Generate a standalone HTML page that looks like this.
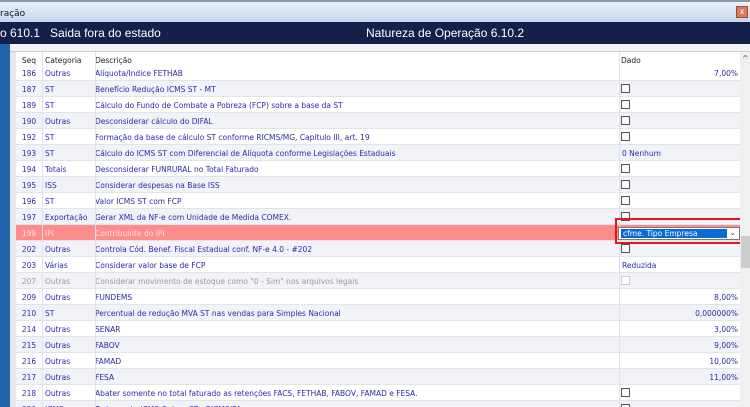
<!DOCTYPE html>
<html><head><meta charset="utf-8"><style>
*{margin:0;padding:0;box-sizing:border-box}
html,body{width:750px;height:407px;overflow:hidden}
body{background:#fff;font-family:"DejaVu Sans","Liberation Sans",sans-serif;position:relative}
#title{position:absolute;left:0;top:0;width:750px;height:22px;background:linear-gradient(#e8f0fa,#c6d8ee);border-top:2px solid #8a96a6;font-size:9px;color:#111}
#close{position:absolute;right:2px;top:4px;width:12px;height:12px;background:#d97a60;border:1px solid #a04a30;color:#fff;font-size:8px;text-align:center;line-height:10px}
#nav{position:absolute;left:0;top:22px;width:750px;height:22px;background:#14204a;color:#fff;font-size:12px;font-family:"Liberation Sans",sans-serif}
#left{position:absolute;left:0;top:44px;width:10px;height:363px;background:#1f62ad}
#lgray{position:absolute;left:10px;top:44px;width:6px;height:363px;background:#e6e8ee}
#strip{position:absolute;left:10px;top:44px;width:740px;height:8px;background:#f1f3f8;border-bottom:1px solid #c9ccd4}
#sb{position:absolute;left:740px;top:52px;width:10px;height:355px;background:#f0f0f0}
#thumb{position:absolute;left:741px;top:236px;width:9px;height:32px;background:#cdcdcd}
.r{position:absolute;left:16px;width:724px;height:16px;font-size:7.5px;color:#2b2ba0;border-bottom:1px solid #e2e4ea}
.r span{position:absolute;top:4px;white-space:nowrap}
.g{background:#f2f3f8}
.c1{left:0;width:26px;text-align:center}
.c2{left:29px}
.c3{left:79px}
.c4{left:606px}
.c4r{right:2px}
.cb{position:absolute;left:605px;top:3px;width:9px;height:9px;border:1px solid #555;background:#fff}
.vl{position:absolute;top:52px;height:355px;width:1px;background:#e0e2e8}
</style></head><body>
<div id="title"><span style="position:absolute;left:0;top:7px">ração</span><div id="close">x</div></div>
<div id="nav"><span style="position:absolute;left:0;top:4px">o 610.1&nbsp;&nbsp;&nbsp;Saida fora do estado</span><span style="position:absolute;left:366px;top:4px">Natureza de Operação 6.10.2</span></div>
<div id="left"></div><div id="lgray"></div><div id="strip"></div>
<div class="r" style="top:52px;color:#222;border:none"><span class="c1">Seq</span><span class="c2">Categoria</span><span class="c3">Descrição</span><span class="c4" style="left:605px">Dado</span></div>
<div class="r" style="top:65px"><span class="c1">186</span><span class="c2">Outras</span><span class="c3">Alíquota/Indice FETHAB</span><span class="c4r">7,00%</span></div>
<div class="r g" style="top:81px"><span class="c1">187</span><span class="c2">ST</span><span class="c3">Benefício Redução ICMS ST - MT</span><i class="cb"></i></div>
<div class="r" style="top:97px"><span class="c1">189</span><span class="c2">ST</span><span class="c3">Cálculo do Fundo de Combate a Pobreza (FCP) sobre a base da ST</span><i class="cb"></i></div>
<div class="r g" style="top:113px"><span class="c1">190</span><span class="c2">Outras</span><span class="c3">Desconsiderar cálculo do DIFAL</span><i class="cb"></i></div>
<div class="r" style="top:129px"><span class="c1">192</span><span class="c2">ST</span><span class="c3">Formação da base de cálculo ST conforme RICMS/MG, Capitulo III, art. 19</span><i class="cb"></i></div>
<div class="r g" style="top:145px"><span class="c1">193</span><span class="c2">ST</span><span class="c3">Cálculo do ICMS ST com Diferencial de Alíquota conforme Legislações Estaduais</span><span class="c4">0 Nenhum</span></div>
<div class="r" style="top:161px"><span class="c1">194</span><span class="c2">Totais</span><span class="c3">Desconsiderar FUNRURAL no Total Faturado</span><i class="cb"></i></div>
<div class="r g" style="top:177px"><span class="c1">195</span><span class="c2">ISS</span><span class="c3">Considerar despesas na Base ISS</span><i class="cb"></i></div>
<div class="r" style="top:193px"><span class="c1">196</span><span class="c2">ST</span><span class="c3">Valor ICMS ST com FCP</span><i class="cb"></i></div>
<div class="r g" style="top:209px"><span class="c1">197</span><span class="c2">Exportação</span><span class="c3">Gerar XML da NF-e com Unidade de Medida COMEX.</span><i class="cb"></i></div>
<div class="r" style="top:225px;background:#ff8c8c;color:#fbe4e4"><span class="c1">199</span><span class="c2">IPI</span><span class="c3">Contribuinte do IPI</span></div>
<div class="r g" style="top:241px"><span class="c1">202</span><span class="c2">Outras</span><span class="c3">Controla Cód. Benef. Fiscal Estadual conf. NF-e 4.0 - #202</span><i class="cb"></i></div>
<div class="r" style="top:257px"><span class="c1">203</span><span class="c2">Várias</span><span class="c3">Considerar valor base de FCP</span><span class="c4">Reduzida</span></div>
<div class="r g" style="top:273px;color:#999"><span class="c1">207</span><span class="c2">Outras</span><span class="c3">Considerar movimento de estoque como "0 - Sim" nos arquivos legais</span><i class="cb" style="border-color:#ccc"></i></div>
<div class="r" style="top:289px"><span class="c1">209</span><span class="c2">Outras</span><span class="c3">FUNDEMS</span><span class="c4r">8,00%</span></div>
<div class="r g" style="top:305px"><span class="c1">210</span><span class="c2">ST</span><span class="c3">Percentual de redução MVA ST nas vendas para Simples Nacional</span><span class="c4r">0,000000%</span></div>
<div class="r" style="top:321px"><span class="c1">214</span><span class="c2">Outras</span><span class="c3">SENAR</span><span class="c4r">3,00%</span></div>
<div class="r g" style="top:337px"><span class="c1">215</span><span class="c2">Outras</span><span class="c3">FABOV</span><span class="c4r">9,00%</span></div>
<div class="r" style="top:353px"><span class="c1">216</span><span class="c2">Outras</span><span class="c3">FAMAD</span><span class="c4r">10,00%</span></div>
<div class="r g" style="top:369px"><span class="c1">217</span><span class="c2">Outras</span><span class="c3">FESA</span><span class="c4r">11,00%</span></div>
<div class="r" style="top:385px"><span class="c1">218</span><span class="c2">Outras</span><span class="c3">Abater somente no total faturado as retenções FACS, FETHAB, FABOV, FAMAD e FESA.</span><i class="cb"></i></div>
<div class="r g" style="top:401px"><span class="c1">220</span><span class="c2">ICMS</span><span class="c3">Tratamento ICMS Outras ST - RICMS/PA.</span><i class="cb"></i></div>
<div class="vl" style="left:42px"></div><div class="vl" style="left:95px"></div><div class="vl" style="left:619px"></div>
<div style="position:absolute;left:618px;top:227px;width:122px;height:13px;background:#fff;border:1px solid #7a7a7a"><div style="position:absolute;left:2px;top:1px;width:106px;height:9px;background:#0a6ad6;color:#fff;font-size:7.5px;line-height:9px;padding-left:2px">cfme. Tipo Empresa</div><span style="position:absolute;right:3px;top:0;font-size:8px;color:#555">⌄</span></div>
<div style="position:absolute;left:615px;top:218px;width:127px;height:26px;border:2px solid #e8141c"></div>
<div id="sb"></div><div id="thumb"></div>
<div style="position:absolute;left:742px;top:54px;font-size:8px;color:#444">^</div>
</body></html>
